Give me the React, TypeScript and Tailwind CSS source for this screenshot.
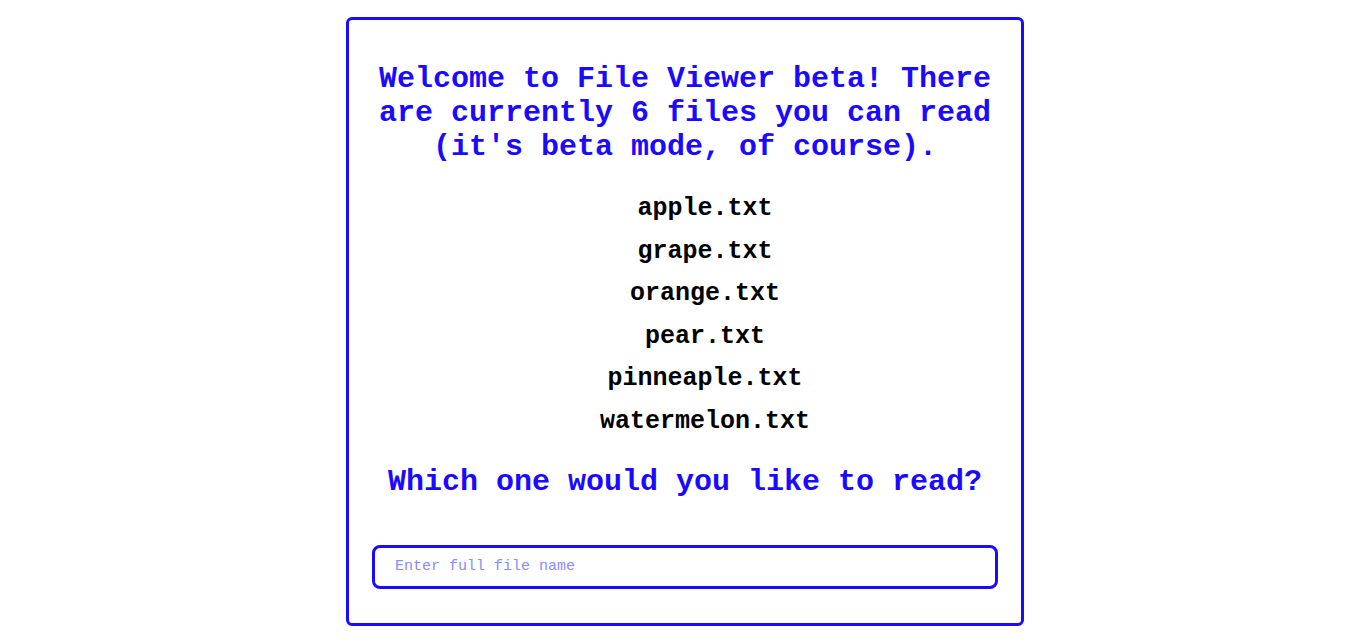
const files = [
  "apple.txt",
  "grape.txt",
  "orange.txt",
  "pear.txt",
  "pinneaple.txt",
  "watermelon.txt",
];

export default function App() {
  return (
    <div className="min-h-screen bg-white pt-[17px] pl-[4px] flex justify-center font-['Liberation_Mono','Courier_New',monospace]">
      <div className="w-[678px] h-[609px] border-[3px] border-[#1a0aff] rounded-[6px] px-[23px] pt-[42px] flex flex-col items-center">
        <h1 className="text-[30px] leading-[34px] font-bold text-[#1a0aff] text-center">
          Welcome to File Viewer beta! There are currently 6 files you can read
          (it's beta mode, of course).
        </h1>
        {/* list keeps the browser's default left indent, so it sits off-centre */}
        <ul className="mt-[24px] pl-[40px] flex flex-col items-center">
          {files.map((f) => (
            <li key={f} className="text-[25px] leading-[42.6px] font-bold text-black">
              {f}
            </li>
          ))}
        </ul>
        <h2 className="mt-[21px] text-[30px] leading-[34px] font-bold text-[#1a0aff] text-center">
          Which one would you like to read?
        </h2>
        <input
          type="text"
          placeholder="Enter full file name"
          className="mt-[46px] shrink-0 w-full h-[44px] border-[3px] border-[#1a0aff] rounded-[8px] px-[20px] text-[15px] outline-none placeholder:text-[#8a8aff] font-['Liberation_Mono','Courier_New',monospace]"
        />
      </div>
    </div>
  );
}
